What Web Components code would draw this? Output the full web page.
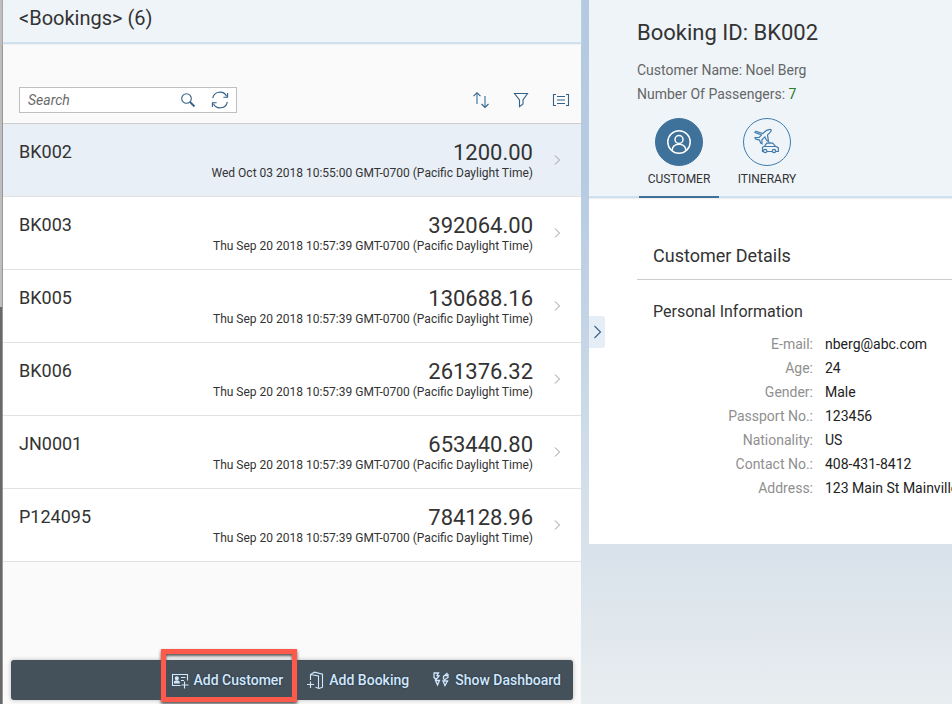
<!DOCTYPE html>
<html lang="en">
<head>
<meta charset="utf-8">
<meta name="viewport" content="width=device-width, initial-scale=1">
<title>Bookings</title>
<style>
html, body { margin: 0; height: 100%; }
body { font-family: Roboto, "Liberation Sans", sans-serif; font-size: 14px; color: #333; background: #dfe7ee; overflow-x: hidden; }
</style>
</head>
<body>
<booking-app></booking-app>
<script>
const base = '<style>*{box-sizing:border-box}h1,h2,h3,p,ul,dl,dd{margin:0;padding:0}button{font:inherit;color:inherit;background:none;border:0;padding:0;margin:0;cursor:pointer}</style>';
function define(name, html, ready) {
  const template = document.createElement('template');
  template.innerHTML = base + html;
  customElements.define(name, class extends HTMLElement {
    connectedCallback() {
      if (this.shadowRoot) return;
      this.attachShadow({ mode: 'open' }).append(template.content.cloneNode(true));
      if (ready) ready(this, this.shadowRoot);
    }
  });
}

const icons = {
  search: [16, '<circle cx="6.5" cy="6.5" r="4.8"/><path d="M10 10l4.5 4.500" stroke-width="1.8"/>'],
  refresh: [18, '<path d="M1.700 7.200A7.400 7.400 0 0 1 15.600 5.200M16.300 10.800A7.400 7.400 0 0 1 2.400 12.800M16.600 2v4.200h-4.200M1.400 16v-4.200h4.200"/>'],
  sort: [18, '<g stroke="#5f8cae" stroke-width="1.400"><path d="M5 13V2M13 5v11"/></g><path d="M1.500 5.200L5 1.700l3.500 3.500M9.500 13l3.500 3.500 3.500-3.500"/>'],
  filter: [16, '<path d="M1.500 1.500h13L10 8v4l-3.500 2.700V8z"/>'],
  group: [18, '<path d="M4 3.500H1.500v11H4M14 3.500h2.500v11H14M5 5.500h8M5 9h8M5 12.500h8"/>'],
  next: [12, '<path d="M4 1.500L8.500 6 4 10.500" stroke-width="1"/>'],
  expand: [16, '<path d="M5.500 2l6 6-6 6"/>'],
  person: [24, '<g stroke-width="1.500"><circle cx="12" cy="12" r="11.200"/><circle cx="12" cy="9.500" r="4"/><path d="M5 20.300c.6-4.200 3.200-6 7-6s6.400 1.800 7 6"/></g>'],
  travel: [26, '<g stroke-width="1.200"><path d="M2 2.300l6.800 2.200L12 1.800c1.600-1.300 4.600-1.500 4.900-1.200.6.600-.2 2.200-1.500 3.500l-1.900 1.800 1 6.700-1.800-1.200-1.800-3.500-3 2.800.1 4-1.300-.7-1.200-2.900L1.500 9.900 1 8.500l4.200-.1L7.500 6 1 3.400z"/><path d="M9.500 22.500h-1v-4.200l2-1 2.200-3.200h6l2.800 3.200 2.800 1.300v3.900H22M13 22.500h5.300M10.500 17.500h11.700M15 14.100l1.200-1"/><circle cx="11.200" cy="22" r="1.700"/><circle cx="20" cy="22" r="1.700"/></g>'],
  addCustomer: [16, '<path d="M8.500 13.500h-8v-11h15v6M9 5.500h4.500M9 8.500h3M12.500 9.500v7M9.500 13h7"/><circle cx="4.800" cy="6.300" r="1.500" fill="currentColor"/><path d="M2.500 11V9.800q2.300-1.800 4.600 0V11z" fill="currentColor"/>'],
  addBooking: [16, '<path d="M3.500 8V2.500l4-2.300 8 2v13l-3.500 1.300-3.500-1.200M3.500 2.500l8 1.500v12.500M3.500 9.500v6.500M0 12.500h7"/>'],
  dashboard: [16, '<path d="M.5 1h5L4 3.500l2 .5-3 3.500M1 1.500v4l2 2M2.500 8.500h4L4.500 13zM14.500 1l-4 3.500v3M15 2v3.500L11 8M10 9h4.500L12 13.500zM11.500 3.500h3" stroke-width="1.300"/>']
};
define('ui-icon', '<style>:host{display:inline-flex;flex:none}svg{display:block;overflow:visible}</style><svg fill="none" stroke="currentColor" stroke-width="1.1" aria-hidden="true"></svg>', (el, root) => {
  const [size, shape] = icons[el.getAttribute('name')];
  const svg = root.querySelector('svg');
  svg.setAttribute('viewBox', `0 0 ${size} ${size}`);
  svg.setAttribute('width', size);
  svg.setAttribute('height', size);
  svg.innerHTML = shape;
});

define('booking-row', `<style>
:host{display:block;background:#fff;border-bottom:1px solid #e1e1e1}
:host([selected]){background:#e8eff7}
button{width:100%;height:72px;display:flex;padding:16px 18px 0 16px;text-align:left;align-items:flex-start}
.id{font-size:18px;line-height:24px;flex:1}
.sum{text-align:right}
.amount{font-size:22px;line-height:26px}
.date{font-size:12px;line-height:14px;white-space:nowrap}
ui-icon{color:#999;margin:14px 0 0 18px}
span{display:block}
</style><button type="button"><span class="id"><slot name="id"></slot></span><span class="sum"><span class="amount"><slot name="amount"></slot></span><span class="date"><slot></slot></span></span><ui-icon name="next"></ui-icon></button>`);

define('tool-button', `<style>
:host{display:block}
button{width:40px;height:32px;display:grid;place-items:center;color:#346187}
</style><button type="button"></button>`, (el, root) => {
  const button = root.querySelector('button');
  button.setAttribute('aria-label', el.getAttribute('label'));
  const icon = document.createElement('ui-icon');
  icon.setAttribute('name', el.getAttribute('icon'));
  button.append(icon);
});

define('search-field', `<style>
:host{display:flex;width:218px;height:26px;background:#fff;border:1px solid #bfbfbf;box-sizing:border-box}
input{flex:1;min-width:0;border:0;outline:0;background:none;font:inherit;color:#333;padding:0 8px}
input::placeholder{color:#6a6a6a;font-style:italic;opacity:1}
button{width:32px;display:grid;place-items:center;color:#346187}
</style><input type="search" placeholder="Search" aria-label="Search"><button type="button" aria-label="Search"><ui-icon name="search"></ui-icon></button><button type="button" aria-label="Refresh"><ui-icon name="refresh"></ui-icon></button>`);

define('footer-action', `<style>
:host{display:block;position:relative}
button{height:40px;padding:0 12px;display:flex;align-items:center;gap:6px;color:#d1e8ff;white-space:nowrap;font-weight:500;text-shadow:0 0 2px #1d2b36}
:host([marked])::after{content:"";position:absolute;inset:-11px -2px -2px 1px;border:5px solid #fd5a4b;box-shadow:0 2px 3px #555,inset 0 2px 3px #555;pointer-events:none}
</style><button type="button"><slot name="icon"></slot><slot></slot></button>`);

define('booking-list', `<style>
:host{display:flex;flex-direction:column;background:#fafafa;min-width:0}
header{height:44px;background:#eff4f9;border-bottom:2px solid #cfe1ef;padding:6px 16px;box-shadow:0 1px 1px #f0f0f0}
h1{font-size:20px;line-height:24px;font-weight:400}
.tools{height:80px;padding:32px 0 0 16px;display:flex;border-bottom:1px solid #ccc;align-items:center}
.spacer{flex:1}
ul{list-style:none}
footer{margin:auto 8px 4px;height:40px;background:#44515b;border-radius:3px;box-shadow:0 0 4px #bbb;display:flex;justify-content:flex-end}
</style>
<header><h1>&lt;Bookings&gt; (6)</h1></header>
<div class="tools"><search-field></search-field><div class="spacer"></div>
<tool-button icon="sort" label="Sort"></tool-button><tool-button icon="filter" label="Filter"></tool-button><tool-button icon="group" label="Group"></tool-button></div>
<ul></ul>
<footer><footer-action marked><ui-icon slot="icon" name="addCustomer"></ui-icon>Add Customer</footer-action><footer-action><ui-icon slot="icon" name="addBooking"></ui-icon>Add Booking</footer-action><footer-action><ui-icon slot="icon" name="dashboard"></ui-icon>Show Dashboard</footer-action></footer>`, (el, root) => {
  const later = 'Thu Sep 20 2018 10:57:39 GMT-0700 (Pacific Daylight Time)';
  root.querySelector('ul').innerHTML = [
    ['BK002', '1200.00', 'Wed Oct 03 2018 10:55:00 GMT-0700 (Pacific Daylight Time)'],
    ['BK003', '392064.00', later], ['BK005', '130688.16', later], ['BK006', '261376.32', later],
    ['JN0001', '653440.80', later], ['P124095', '784128.96', later]
  ].map(([id, amount, date], i) => `<li><booking-row${i ? '' : ' selected'}><span slot="id">${id}</span><span slot="amount">${amount}</span>${date}</booking-row></li>`).join('');
});

define('icon-tab', `<style>
:host{display:block}
button{width:80px;height:80px;display:flex;flex-direction:column;align-items:center;border-bottom:2px solid transparent;font-size:12px;line-height:14px;color:#333}
.disc{width:48px;height:48px;border:1px solid #427cac;border-radius:50%;display:grid;place-items:center;color:#427cac;margin-bottom:6px}
:host([selected]) .disc{background:#3f729b;border-color:#3f729b;color:#fff}
:host([selected]) button{border-color:#3f729b}
</style><button type="button" role="tab"><span class="disc"><slot name="icon"></slot></span><slot></slot></button>`, (el, root) =>
  root.querySelector('button').setAttribute('aria-selected', el.hasAttribute('selected')));

define('detail-form', `<style>
:host{display:block;background:#fff;padding:40px 0 44px 48px}
h2{font-size:18px;line-height:24px;font-weight:400;padding:6px 16px 11px;border-bottom:1px solid #ccc}
h3{font-size:16px;line-height:24px;font-weight:400;padding:20px 16px 8px}
dl{display:grid;grid-template-columns:176px 1fr;column-gap:12px;line-height:24px;white-space:nowrap}
dt{text-align:right;color:#8f8f8f}
dd{color:#222}
</style><h2>Customer Details</h2><h3>Personal Information</h3>
<dl><dt>E-mail:</dt><dd>nberg@abc.com</dd><dt>Age:</dt><dd>24</dd><dt>Gender:</dt><dd>Male</dd><dt>Passport No.:</dt><dd>123456</dd><dt>Nationality:</dt><dd>US</dd><dt>Contact No.:</dt><dd>408-431-8412</dd><dt>Address:</dt><dd>123 Main St Mainville</dd></dl>`);

define('booking-detail', `<style>
:host{display:block;position:relative;min-width:0;overflow:hidden;margin-left:8px}
header{background:#eff4f9;border-bottom:2px solid #cfe1ef;padding:19px 0 0 48px;box-shadow:0 1px 1px #eee;position:relative}
h1{font-size:22px;line-height:28px;font-weight:400;margin-bottom:11px}
p{line-height:24px;color:#666}
b{font-weight:400;color:#2b7c2b}
nav{display:flex;gap:8px;padding:12px 2px 0;margin-bottom:-2px}
.expand{position:absolute;left:0;top:316px;width:16px;height:32px;background:#e5edf7;border-radius:0 3px 3px 0;color:#346187;display:grid;place-items:center}
</style><header><h1>Booking ID: BK002</h1><p>Customer Name: Noel Berg</p><p>Number Of Passengers: <b>7</b></p>
<nav role="tablist"><icon-tab selected><ui-icon slot="icon" name="person"></ui-icon>CUSTOMER</icon-tab><icon-tab><ui-icon slot="icon" name="travel"></ui-icon>ITINERARY</icon-tab></nav></header>
<detail-form></detail-form><button class="expand" type="button" aria-label="Show details"><ui-icon name="expand"></ui-icon></button>`);

define('booking-app', `<style>
:host{display:grid;grid-template-columns:3px minmax(0,578fr) minmax(0,371fr);min-height:100vh;background:linear-gradient(#b4cae1 0%,#b6cbe2 25%,#dae3eb 80%,#e8edf0 100%)}
.edge{background:linear-gradient(#bebebe 307px,#686868 307px);border-right:1px solid #999}
</style><div class="edge"></div><booking-list></booking-list><booking-detail></booking-detail>`);
</script>
</body>
</html>
